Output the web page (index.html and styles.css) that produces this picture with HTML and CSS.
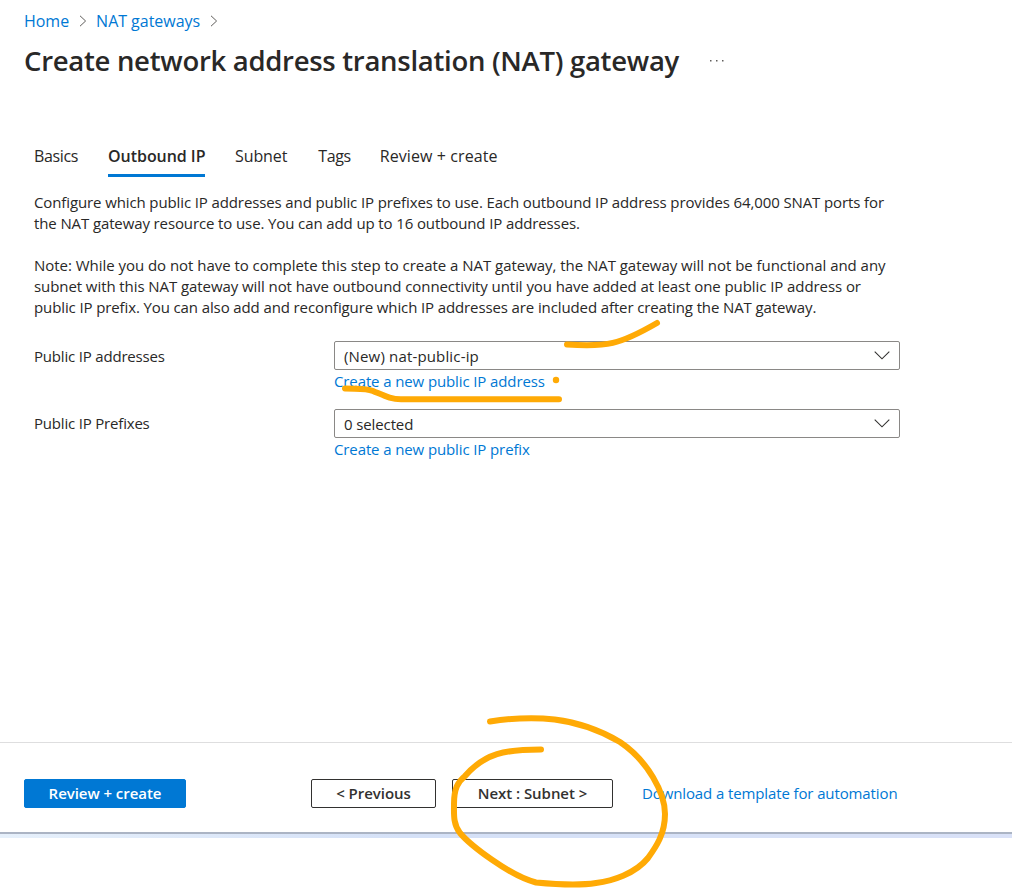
FILE: index.html
```html
<!DOCTYPE html>
<html lang="en">
<head>
<meta charset="utf-8">
<title>Create network address translation (NAT) gateway</title>
<link rel="stylesheet" href="styles.css">
</head>
<body>
<div class="page">
  <header class="header">
    <nav class="breadcrumb">
      <a class="link" href="#">Home</a>
      <svg class="crumb-sep" viewBox="0 0 8 12"><path d="M1 .8 6.6 6 1 11.2"/></svg>
      <a class="link" href="#">NAT gateways</a>
      <svg class="crumb-sep" viewBox="0 0 8 12"><path d="M1 .8 6.6 6 1 11.2"/></svg>
    </nav>
    <div class="title-row">
      <h1 class="title">Create network address translation (NAT) gateway</h1>
      <svg class="more" viewBox="0 0 14 2"><path d="M0 0h1.500v1.500H0zM6 0h1.500v1.500H6zM12 0h1.500v1.500H12z"/></svg>
    </div>
  </header>
  <main class="content">
    <nav class="tabs">
      <a class="tab tab-basics">Basics</a>
      <a class="tab tab-active">Outbound IP</a>
      <a class="tab tab-subnet">Subnet</a>
      <a class="tab tab-tags">Tags</a>
      <a class="tab tab-review">Review + create</a>
    </nav>
    <div class="description">
      <p class="para">Configure which public IP addresses and public IP prefixes to use. Each outbound IP address provides 64,000 SNAT ports for<br>the NAT gateway resource to use. You can add up to 16 outbound IP addresses.</p>
      <p class="para"><span class="note-lead">Note: While you do not have to complete this step to create a NAT gateway, the NAT gateway will not be functional and any</span><br><span class="note-body">subnet with this NAT gateway will not have outbound connectivity until you have added at least one public IP address or</span><br>public IP prefix. You can also add and reconfigure which IP addresses are included after creating the NAT gateway.</p>
    </div>
    <div class="form">
      <div class="field">
        <label class="label">Public IP addresses</label>
        <div class="control">
          <div class="select"><span class="value value-new">(New) nat-public-ip</span><svg class="chevron" viewBox="0 0 16 9"><path d="M.7.7 8 7.8 15.300.7"/></svg></div>
          <a class="link" href="#">Create a new public IP address</a>
        </div>
      </div>
      <div class="field">
        <label class="label label-prefixes">Public IP Prefixes</label>
        <div class="control">
          <div class="select"><span class="value">0 selected</span><svg class="chevron" viewBox="0 0 16 9"><path d="M.7.7 8 7.8 15.300.7"/></svg></div>
          <a class="link" href="#">Create a new public IP prefix</a>
        </div>
      </div>
    </div>
  </main>
  <footer class="footer">
    <button class="button primary">Review + create</button>
    <button class="button previous">&lt; Previous</button>
    <button class="button next">Next : Subnet &gt;</button>
    <a class="link template" href="#">Download a template for automation</a>
  </footer>
  <div class="edge"></div>
  <svg class="ink" viewBox="0 0 1012 888">
    <path d="M567 344.500C607 347 619 345 657 323"/>
    <path d="M345 388.500C358 389 366 388 373 391C385 396 391 399.300 401 399.300H559"/>
    <path d="M490 721.500C533 715 576 716 620 742C648 761 665 793 665 814C665 834 656 847 648 858C635 874 612 881 596 883C577 886 552 884 536 882.500C510 876 470 845 460 833C453 824 454 814 454 804C454 788 458 782 465 776C485 753 505 749.500 541 749.500"/>
    <circle cx="556" cy="380" r="3.200"/>
  </svg>
</div>
</body>
</html>
```
FILE: styles.css
```css
* { box-sizing: border-box; }
body {
  margin: 0;
  background: #fff;
  color: #292827;
  font-family: "Open Sans", "Noto Sans", sans-serif;
  font-size: 15px;
  line-height: 21px;
  letter-spacing: -0.115px;
}
.page {
  position: relative;
  display: flex;
  flex-direction: column;
  height: 888px;
  overflow: hidden;
}
.link { color: #0078d4; text-decoration: none; white-space: nowrap; }
.header { height: 142px; padding: 10px 24px 0; }
.breadcrumb { display: flex; align-items: center; height: 22px; font-size: 16px; letter-spacing: -0.03px; }
.crumb-sep { width: 8px; height: 12px; margin: 0 9.5px; fill: none; stroke: #605e5c; stroke-width: 1; }
.title-row { display: flex; align-items: center; height: 40px; margin-top: 9px; }
.title {
  width: 686px;
  margin: 0;
  font-size: 27.5px;
  line-height: 40px;
  font-weight: 600;
  letter-spacing: -0.29px;
  white-space: nowrap;
}
.more { width: 14px; height: 2px; fill: #605e5c; }
.content { flex: 1; padding: 0 34px; }
.tabs { display: flex; gap: 30px; height: 35px; font-size: 16px; line-height: 28px; letter-spacing: -0.1px; white-space: nowrap; }
.tab-basics { letter-spacing: -0.36px; }
.tab-active { width: 97px; border-bottom: 3px solid #0078d4; font-weight: 600; letter-spacing: -0.05px; }
.tab-tags { letter-spacing: -0.4px; margin-left: 1px; }
.tab-review { letter-spacing: 0.09px; margin-left: -1px; }
.description { margin-top: 15px; }
.para { margin: 0 0 21px; white-space: nowrap; }
.note-lead { letter-spacing: -0.035px; }
.note-body { letter-spacing: -0.075px; }
.form { display: flex; flex-direction: column; gap: 17px; margin-top: 23px; }
.field { display: flex; height: 51px; }
.label { width: 300px; padding-top: 5px; letter-spacing: -0.19px; }
.label-prefixes { padding-top: 4px; }
.select {
  display: flex;
  align-items: center;
  justify-content: space-between;
  width: 566px;
  height: 29px;
  padding: 0 9px;
  border: 1px solid #8a8886;
  border-radius: 2px;
}
.value { padding-top: 2px; }
.value-new { letter-spacing: 0.16px; }
.control .link { display: block; margin-top: 1px; }
.chevron { width: 16px; height: 9px; fill: none; stroke: #323130; stroke-width: 1.1; }
.footer { display: flex; align-items: center; height: 90px; padding: 12px 24px 0; border-top: 1px solid #dededf; }
.button {
  height: 29px;
  padding: 0;
  border: 1px solid #323130;
  border-radius: 2px;
  background: #fff;
  color: #323130;
  font: 600 15px/27px "Open Sans", "Noto Sans", sans-serif;
  letter-spacing: -0.05px;
}
.primary { width: 162px; border-color: #0078d4; background: #0078d4; color: #fff; }
.previous { width: 125px; margin-left: 125px; }
.next { width: 161px; margin-left: 16px; }
.template { margin-left: 29px; }
.edge {
  height: 6px;
  margin-bottom: 50px;
  border-top: 2px solid #abb4c4;
  background: linear-gradient(90deg, #e6f0fb, #d5e1f7 40%, #d9e1f7) padding-box;
}
.ink {
  position: absolute;
  inset: 0;
  width: 1012px;
  height: 888px;
  fill: none;
  stroke: #ffaa05;
  stroke-width: 6;
  stroke-linecap: round;
  stroke-linejoin: round;
  pointer-events: none;
}
.ink circle { fill: #ffaa05; stroke: none; }
```
